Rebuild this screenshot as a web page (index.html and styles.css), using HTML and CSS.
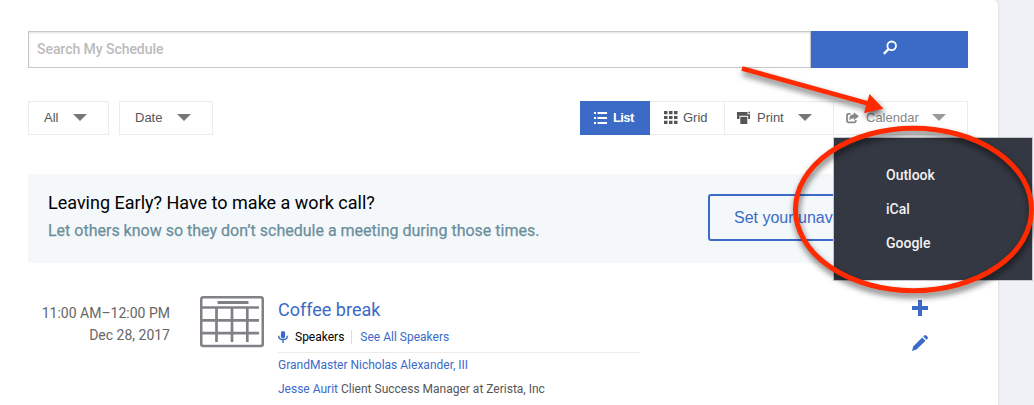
FILE: index.html
```html
<!DOCTYPE html>
<html lang="en">
<head>
    <meta charset="UTF-8">
    <meta name="viewport" content="width=device-width, initial-scale=1.0">
    <title>My Schedule</title>
    <link rel="stylesheet" href="styles.css">
</head>
<body>

    <main class="panel">
        <form class="search">
            <input type="text" class="search-input" placeholder="Search My Schedule">
            <button type="button" class="search-btn" aria-label="Search">
                <svg width="16" height="16" viewBox="0 0 16 16" fill="none" stroke="#fff">
                    <circle cx="9.7" cy="5.8" r="4.3" stroke-width="1.8"/>
                    <path d="M6.6 9L1.9 13.8" stroke-width="2.4"/>
                </svg>
            </button>
        </form>

        <div class="toolbar">
            <div class="filters">
                <a class="filter">All <i class="caret"></i></a>
                <a class="filter date">Date <i class="caret"></i></a>
            </div>
            <div class="views">
                <a class="view list">
                    <svg width="13" height="12" viewBox="0 0 13 12" fill="#fff">
                        <path d="M0 0h2v2H0zM0 5h2v2H0zM0 10h2v2H0zM3.5 0H13v2H3.5zM3.5 5H13v2H3.5zM3.5 10H13v2H3.5z"/>
                    </svg>
                    <span>List</span>
                </a>
                <a class="view grid">
                    <svg width="14" height="13" viewBox="0 0 14 13" fill="#555">
                        <path d="M0 0h3.5v3.2H0zM5 0h3.5v3.2H5zM10 0h3.5v3.2H10zM0 4.9h3.5v3.2H0zM5 4.9h3.5v3.2H5zM10 4.9h3.5v3.2H10zM0 9.8h3.5V13H0zM5 9.8h3.5V13H5zM10 9.8h3.5V13H10z"/>
                    </svg>
                    <span>Grid</span>
                </a>
                <a class="view print">
                    <svg width="14" height="13" viewBox="0 0 14 13" fill="#555">
                        <path d="M0 1h10.5v2.2H13V8h-1.8V4.8H2.4V8H0z"/>
                        <path d="M3.3 5.8h7V13h-7z"/>
                        <path d="M11.4 0.7H13v1.6h-1.6z"/>
                    </svg>
                    <span>Print</span>
                    <i class="caret"></i>
                </a>
                <div class="view calendar">
                    <svg width="13" height="12" viewBox="0 0 13 12">
                        <path d="M4.5 1.8H2.2Q1 1.8 1 3v6.1q0 1.2 1.2 1.2h6.4q1.2 0 1.2-1.2V8" fill="none" stroke="#888" stroke-width="1.8"/>
                        <path d="M7.8 0.2L13 4.2 7.8 8.2V6.2C6 6.1 4.6 6.8 3.8 8.6 2.8 4.8 4.4 2.3 7.8 2.2z" fill="#888"/>
                    </svg>
                    <span>Calendar</span>
                    <i class="caret"></i>
                    <ul class="menu">
                        <li>Outlook</li>
                        <li>iCal</li>
                        <li>Google</li>
                    </ul>
                </div>
            </div>
        </div>

        <section class="banner">
            <div>
                <h2>Leaving Early? Have to make a work call?</h2>
                <p>Let others know so they don’t schedule a meeting during those times.</p>
            </div>
            <button type="button" class="unavailable">Set your unav</button>
        </section>

        <article class="session">
            <div class="time">11:00 AM–12:00 PM<br>Dec 28, 2017</div>
            <svg class="thumb" width="64" height="52" viewBox="0 0 64 52" fill="none" stroke="#7f8187">
                <rect x="1.25" y="1.25" width="61.5" height="48.8" rx="2" stroke-width="2.5"/>
                <path d="M17.5 6.5h31" stroke-width="3"/>
                <path d="M2 11.5h57M2 24.3h57M2 37.2h57M16.5 11v35M32 11v35M47.3 11v35" stroke-width="2.7"/>
            </svg>
            <div class="details">
                <h3>Coffee break</h3>
                <div class="speakers">
                    <svg width="10" height="12" viewBox="0 0 10 12">
                        <rect x="2.9" y="0" width="4.2" height="7.6" rx="2.1" fill="#3b6ac7"/>
                        <path d="M0.7 4.8c0 5.2 8.6 5.2 8.6 0M5 8.7V12" fill="none" stroke="#3b6ac7" stroke-width="1.4"/>
                    </svg>
                    <span class="label">Speakers</span>
                    <a>See All Speakers</a>
                </div>
                <p><a>GrandMaster Nicholas Alexander, III</a></p>
                <p><a>Jesse Aurit</a> Client Success Manager at Zerista, Inc</p>
            </div>
            <div class="actions">
                <svg width="16" height="16" viewBox="0 0 16 16" fill="#3b6ac7">
                    <path d="M6 0h4v6h6v4h-6v6H6v-6H0V6h6z"/>
                </svg>
                <svg width="16" height="16" viewBox="0 0 16 16" fill="#3b6ac7">
                    <path d="M0 16L1.2 11.4 10.2 2.4 13.5 5.7 4.5 14.4zM11.2 1.5L12.2 0.5Q13.2-.4 14.2 0.5L15.5 1.8Q16.4 2.8 15.5 3.7L14.5 4.7z"/>
                </svg>
            </div>
        </article>
    </main>

    <!-- arrow and circle drawn over the calendar menu -->
    <svg class="markup" width="1034" height="405" viewBox="0 0 1034 405">
        <path d="M742 68.5L868 103.5" fill="none" stroke="#ff2a00" stroke-width="4.8"/>
        <path d="M869.5 94L883.5 108.8 864 113z" fill="#ff2a00"/>
        <ellipse cx="913.5" cy="209.5" rx="118" ry="81.2" fill="none" stroke="#ff2a00" stroke-width="5"/>
    </svg>

</body>
</html>
```
FILE: styles.css
```css
* {
    box-sizing: border-box;
}
body {
    margin: 0;
    height: 405px;
    overflow: hidden;
    background: #eff1f6;
    font-family: Roboto, sans-serif;
    color: #555;
}
h2, h3, p, ul {
    margin: 0;
    padding: 0;
    font-weight: 400;
}
svg {
    flex: none;
}
a {
    color: #3b6ac7;
}
.panel {
    width: 998px;
    height: 405px;
    padding: 31px 30px 0 28px;
    background: #fff;
    border-top-right-radius: 5px;
    box-shadow: 0 0 3px rgba(0, 0, 0, 0.15);
}
.search {
    display: flex;
    height: 37px;
}
.search-input {
    width: 783px;
    padding: 0 8px 2px;
    border: 1px solid #c8c8c8;
    box-shadow: inset 0 1px 2px rgba(0, 0, 0, 0.12);
    font: 500 14px Roboto, sans-serif;
    letter-spacing: -0.05px;
}
.search-input::placeholder {
    color: #bbb;
}
.search-btn {
    width: 157px;
    padding: 0 0 4px;
    border: 0;
    background: #3b6ac7;
}
.search-btn svg {
    display: block;
    margin: auto;
}
.toolbar {
    display: flex;
    justify-content: space-between;
    height: 34px;
    margin-top: 33px;
    font: 13px "Liberation Sans", Arial, sans-serif;
}
.filters {
    display: flex;
    gap: 10px;
}
.filter {
    display: flex;
    align-items: center;
    justify-content: space-between;
    width: 81px;
    padding: 0 21px 1px 15px;
    border: 1px solid #ececec;
    color: #555;
}
.filter.date {
    width: 94px;
}
.caret {
    border: 7px solid transparent;
    border-top-color: #777;
    border-bottom: 0;
}
.views {
    display: flex;
}
.view {
    display: flex;
    align-items: center;
    padding-bottom: 1px;
    border: 1px solid #ececec;
    border-left: 0;
    color: #555;
}
.view .caret {
    margin-left: auto;
}
.list {
    width: 70px;
    padding-left: 14px;
    gap: 6px;
    border: 0;
    background: #3b6ac7;
    color: #fff;
    font-weight: 700;
    letter-spacing: -0.6px;
}
.grid {
    width: 75px;
    padding-left: 14px;
    gap: 5px;
}
.print {
    width: 109px;
    padding: 0 21px 1px 12px;
    gap: 6px;
}
.calendar {
    position: relative;
    width: 134px;
    padding: 0 21px 1px 12px;
    gap: 7px;
    color: #888;
}
.calendar .caret {
    border-top-color: #999;
}
.menu {
    position: absolute;
    top: 35px;
    left: -1px;
    width: 200px;
    height: 144px;
    padding: 20px 0 0 52px;
    border: 1px solid #c6c8cc;
    background: #343842;
    color: #f2f2f2;
    font: 500 14px/34px Roboto, sans-serif;
    list-style: none;
}
.banner {
    display: flex;
    justify-content: space-between;
    height: 89px;
    margin-top: 39px;
    padding: 16px 20px 0;
    background: #f4f8fb;
}
.banner h2 {
    color: #000;
    font-size: 18px;
    line-height: 25px;
}
.banner p {
    color: #6b8e9b;
    font-size: 16px;
    line-height: 31px;
    -webkit-text-stroke: 0.25px #6b8e9b;
}
.unavailable {
    width: 240px;
    height: 47px;
    margin-top: 4px;
    padding: 0 0 0 24px;
    border: 2px solid #3b6ac7;
    border-radius: 3px;
    background: none;
    color: #3b6ac7;
    font: 16px "Liberation Sans", Arial, sans-serif;
    text-align: left;
}
.session {
    display: flex;
    margin-top: 33px;
}
.time {
    width: 142px;
    padding-top: 6px;
    font-size: 14px;
    line-height: 22px;
    text-align: right;
    color: #666;
}
.thumb {
    margin-left: 30px;
}
.details {
    width: 362px;
    margin-left: 14px;
    font-size: 12px;
}
.details h3 {
    padding-top: 1px;
    color: #3b6ac7;
    font-size: 18px;
    line-height: 26px;
}
.speakers {
    display: flex;
    align-items: center;
    height: 30px;
    padding-bottom: 2px;
    border-bottom: 1px solid #ececec;
}
.speakers .label {
    margin: 0 8px 0 7px;
    padding-right: 7px;
    border-right: 1px solid #ddd;
    color: #000;
}
.details p {
    line-height: 24px;
}
.actions {
    display: flex;
    flex-direction: column;
    gap: 19px;
    margin-left: 272px;
    padding-top: 4px;
}
.markup {
    position: absolute;
    top: 0;
    left: 0;
    filter: drop-shadow(1px 4px 3px rgba(0, 0, 0, 0.6));
}
```
